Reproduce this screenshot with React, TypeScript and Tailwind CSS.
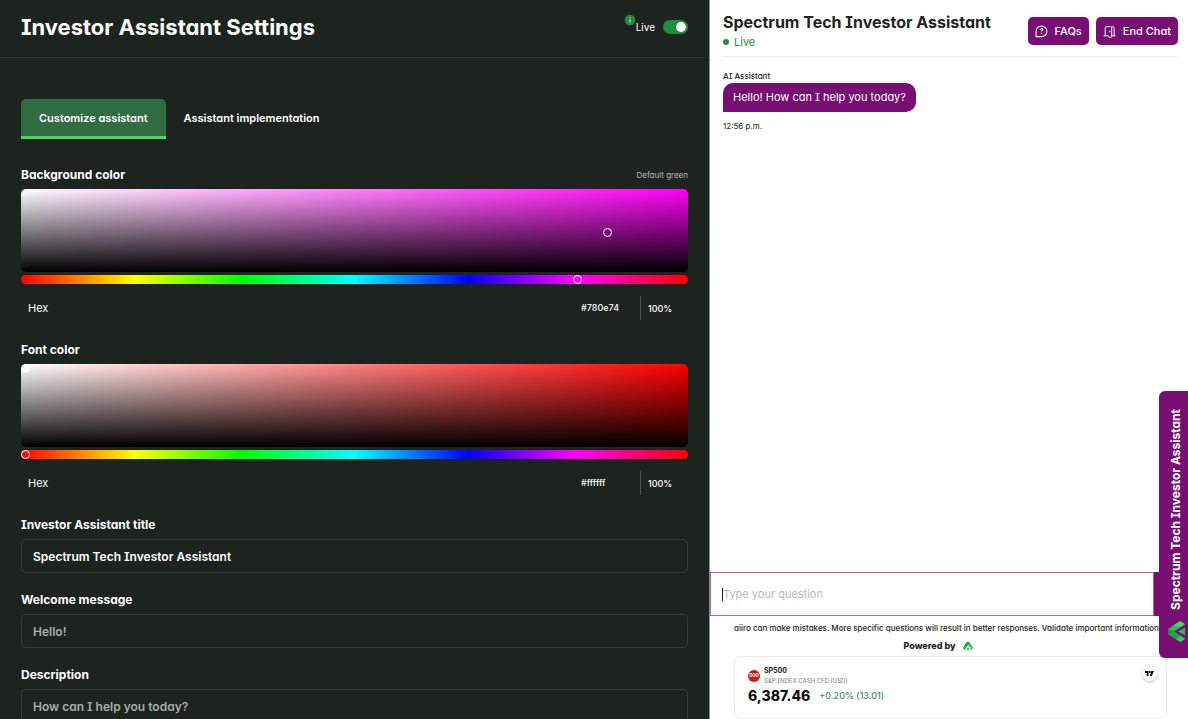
import { useState } from 'react'

interface ColorFieldProps {
  id: string
  label: string
  hint?: string
  hex: string
  hue: number
  saturation: number
  brightness: number
}

const HUE_TRACK =
  'bg-[linear-gradient(to_right,#f00_0%,#ff0_17%,#0f0_33%,#0ff_50%,#00f_67%,#f0f_83%,#f00_100%)]'
const HUE_THUMB =
  '[&::-webkit-slider-thumb]:appearance-none [&::-webkit-slider-thumb]:size-[9px] [&::-webkit-slider-thumb]:rounded-full [&::-webkit-slider-thumb]:border [&::-webkit-slider-thumb]:border-white [&::-webkit-slider-thumb]:bg-transparent'

function ColorField({ id, label, hint, hex, hue: initialHue, saturation, brightness }: ColorFieldProps) {
  const [hue, setHue] = useState(initialHue)
  const [value, setValue] = useState(hex)

  return (
    <section>
      <div className="mb-1 flex h-[21px] items-center justify-between">
        <h2 className="text-[12px] leading-5 font-bold">{label}</h2>
        {hint && (
          <button type="button" className="text-[8px] text-[#b5b9b7]">
            {hint}
          </button>
        )}
      </div>
      {/* saturation / brightness area, black fades up over white-to-hue */}
      <div
        className="relative h-[83px] rounded-[5px]"
        style={{
          backgroundImage: `linear-gradient(to top, #000, transparent), linear-gradient(to right, #fff, hsl(${hue} 100% 50%))`,
        }}
      >
        <div className="absolute top-0 right-[9px] bottom-[9px] left-0">
          <span
            className="absolute size-[9px] rounded-full border border-white"
            style={{
              left: `${saturation}%`,
              top: `${100 - brightness}%`,
              backgroundColor: value,
            }}
          />
        </div>
      </div>
      <input
        type="range"
        min={0}
        max={360}
        value={hue}
        aria-label={`${label} hue`}
        onChange={(e) => setHue(Number(e.target.value))}
        className={`mt-[3px] block h-[9px] w-full appearance-none rounded-full ${HUE_TRACK} ${HUE_THUMB}`}
      />
      <div className="mt-3 flex h-6 items-center pl-[7px] text-[9px]">
        <label htmlFor={id} className="grow text-[11px]">
          Hex
        </label>
        <input
          id={id}
          value={value}
          onChange={(e) => setValue(e.target.value)}
          className="w-[59px] bg-transparent font-medium outline-none"
        />
        <input
          aria-label={`${label} opacity`}
          defaultValue="100%"
          className="h-6 w-12 border-l border-[#4b514e] bg-transparent pl-[7px] font-medium outline-none"
        />
      </div>
    </section>
  )
}

interface TextFieldProps {
  id: string
  label: string
  value?: string
  placeholder?: string
}

function TextField({ id, label, value, placeholder }: TextFieldProps) {
  return (
    <div>
      <label htmlFor={id} className="mb-1 block text-[12px] leading-[21px] font-bold">
        {label}
      </label>
      <input
        id={id}
        defaultValue={value}
        placeholder={placeholder}
        className="block h-[34px] w-full rounded-[5px] border border-[#363c39] bg-transparent px-[11px] text-[12px] font-semibold text-white outline-none placeholder:text-[#a9adab]"
      />
    </div>
  )
}

function SettingsPanel() {
  const [live, setLive] = useState(true)
  const [tab, setTab] = useState('customize')
  const activeTab = 'rounded-t-[5px] border-[#3fdc68] bg-[#326d42]'

  return (
    <div className="min-w-0 overflow-hidden border-r border-[#8a8e8c] bg-[#1d2420] text-white">
      <header className="flex items-center justify-between border-b border-[#272c2a] px-[21px] pt-[11px] pb-[14px]">
        <h1 className="text-[22px] leading-8 font-bold">Investor Assistant Settings</h1>
        <div className="flex items-center">
          <svg viewBox="0 0 12 12" className="mb-[14px] size-3" aria-hidden="true">
            <circle cx="6" cy="6" r="5.3" fill="#1f8e3d" />
            <path d="M6 5.400v3M6 3.200v1" stroke="#cfe8d5" strokeWidth="1.2" />
          </svg>
          <label className="flex cursor-pointer items-center gap-2 text-[10px]">
            <span>Live</span>
            <input
              type="checkbox"
              checked={live}
              onChange={(e) => setLive(e.target.checked)}
              className="peer sr-only"
            />
            <span className="flex h-[14px] w-[25px] items-center rounded-full bg-[#5b625e] p-[2px] peer-checked:justify-end peer-checked:bg-[#1f8e3d]">
              <span className="size-[10px] rounded-full bg-white" />
            </span>
          </label>
        </div>
      </header>

      <main className="px-[21px] pt-[41px]">
        <div role="tablist" className="mb-[25px] flex text-[11px] font-semibold">
          <button
            type="button"
            role="tab"
            aria-selected={tab === 'customize'}
            onClick={() => setTab('customize')}
            className={`h-10 border-b-3 px-[18px] pt-[2px] ${tab === 'customize' ? activeTab : 'border-transparent'}`}
          >
            Customize assistant
          </button>
          <button
            type="button"
            role="tab"
            aria-selected={tab === 'implementation'}
            onClick={() => setTab('implementation')}
            className={`h-10 border-b-3 px-[18px] pt-[2px] ${tab === 'implementation' ? activeTab : 'border-transparent'}`}
          >
            Assistant implementation
          </button>
        </div>

        <div className="flex flex-col gap-[19px]">
          <ColorField
            id="background-hex"
            label="Background color"
            hint="Default green"
            hex="#780e74"
            hue={302}
            saturation={88.4}
            brightness={47}
          />
          <ColorField id="font-hex" label="Font color" hex="#ffffff" hue={0} saturation={0} brightness={100} />
          <div className="flex flex-col gap-4">
            <TextField id="title" label="Investor Assistant title" value="Spectrum Tech Investor Assistant" />
            <TextField id="welcome" label="Welcome message" placeholder="Hello!" />
            <TextField id="description" label="Description" placeholder="How can I help you today?" />
          </div>
        </div>
      </main>
    </div>
  )
}

function FaqIcon() {
  return (
    <svg viewBox="0 0 24 24" className="size-[13px]" fill="none" stroke="currentColor" strokeWidth="2" aria-hidden="true">
      <path d="M2 21.500V12A10 9.800 0 1 1 12 21.500Z" strokeLinejoin="round" />
      <path d="M10.300 8.500a1.900 1.900 0 1 1 2.700 1.800c-.8.400-1 .8-1 1.700M12 14.500v2" />
    </svg>
  )
}

function DoorIcon() {
  return (
    <svg viewBox="0 0 24 24" className="size-[13px]" fill="none" stroke="currentColor" strokeWidth="1.8" aria-hidden="true">
      <path d="M1 20h7M15 20h8M4 20V6.500A3.500 3.500 0 0 1 7.500 3H14" />
      <path d="M16 3h1a3.500 3.500 0 0 1 3.500 3.500V20" />
      <path d="M16 3v18a2 2 0 0 1-2.500 1.800l-2.500-1A3 3 0 0 1 9 19" />
      <path d="M12.500 10.500v3" />
    </svg>
  )
}

/* chevron with a small wedge in its notch */
function BrandMark({ className }: { className: string }) {
  return (
    <svg viewBox="0 0 63 51" className={className} aria-hidden="true">
      <path d="M24 0h15l24 37-10 14-21.500-33L10 51 0 37Z" fill="#2fbf50" />
      <path d="M24 0h15L25 28 10 51 0 37Z" fill="#23a646" />
      <path d="M24 0h15l-7.500 18Z" fill="#178f3a" />
      <path d="m8 25 11 12-9 14L0 37Z" fill="#36cf5c" />
      <path d="m50 17 13 20-10 14-9-14Z" fill="#45d765" />
      <path d="m31.500 30 11 21h-22Z" fill="#2fbf50" />
    </svg>
  )
}

function ChatHeader() {
  const button = 'flex h-7 items-center gap-[7px] rounded-[5px] bg-[#780e74] px-[7px] text-[11px] font-medium text-white'

  return (
    <header className="mr-[10px] ml-[13px] flex justify-between border-b border-[#ececec] pt-3 pb-[6px]">
      <div>
        <h2 className="text-[16px] leading-5 font-bold">Spectrum Tech Investor Assistant</h2>
        <p className="mt-[2px] flex items-center gap-[5px] text-[11px] leading-4 text-[#1f8e3d]">
          <span className="size-[6px] rounded-full bg-[#1f8e3d]" />
          Live
        </p>
      </div>
      <div className="flex gap-[7px] pt-[5px]">
        <button type="button" className={button}>
          <FaqIcon />
          FAQs
        </button>
        <button type="button" className={button}>
          <DoorIcon />
          End Chat
        </button>
      </div>
    </header>
  )
}

function TickerCard() {
  return (
    <article className="mr-[21px] ml-6 rounded-[6px] border border-[#ebebeb] px-[13px] pt-[9px] pb-3">
      <div className="flex items-start justify-between">
        <div className="flex items-center gap-1">
          <span className="flex size-3 items-center justify-center rounded-full bg-[#cc1717] text-[5px] font-bold text-white">
            500
          </span>
          <div>
            <h3 className="text-[7px] leading-[10px] font-bold">SP500</h3>
            <p className="text-[6px] leading-[10px] font-medium text-[#8f8f8f]">S&amp;P INDEX CASH CFD (USD)</p>
          </div>
        </div>
        <span className="-mr-1 flex size-[15px] items-center justify-center rounded-full bg-white shadow-[0_1px_3px_rgba(0,0,0,0.25)]">
          <svg viewBox="0 0 18 10" className="w-[9px]" aria-label="TradingView">
            <path d="M0 0h7v10H3.500V4H0ZM12.500 0H18l-4.500 10H9.500Z" />
            <circle cx="9.500" cy="2" r="2" />
          </svg>
        </span>
      </div>
      <p className="flex items-center gap-[9px] leading-5">
        <span className="text-[14px] font-extrabold text-[#0f0f0f]">6,387.46</span>
        <span className="text-[9px] font-medium text-[#3f8a6a]">+0.20% (13.01)</span>
      </p>
    </article>
  )
}

function ChatPanel() {
  return (
    <div className="relative flex min-w-0 flex-col overflow-hidden bg-white text-[#1d2420]">
      <ChatHeader />

      <div className="grow px-[13px] pt-[13px]">
        <p className="text-[8px] leading-[13px] font-medium">AI Assistant</p>
        <p className="w-fit rounded-[10px] rounded-bl-none bg-[#780e74] px-[10px] py-[6px] text-[11px] leading-[17px] text-white">
          Hello! How can I help you today?
        </p>
        <p className="mt-2 text-[8px] leading-3">12:56 p.m.</p>
      </div>

      <form className="relative flex h-11 shrink-0" onSubmit={(e) => e.preventDefault()}>
        <input
          aria-label="Your question"
          placeholder="Type your question"
          className="min-w-0 grow border border-[#b45fae] px-3 text-[11px] outline-none placeholder:text-[#b9b9b9]"
        />
        {/* text cursor */}
        <span className="absolute top-4 left-3 h-[13px] w-px bg-[#1d2420]" />
        <button type="submit" aria-label="Send" className="w-[34px] bg-[#780e74]" />
      </form>

      <p className="mt-[6px] ml-6 text-[8px] leading-3 font-medium whitespace-nowrap">
        aiiro can make mistakes. More specific questions will result in better responses. Validate important information.
      </p>
      <p className="mt-1 mb-[2px] flex items-center justify-center gap-[7px] pr-[22px] text-[9px] leading-4 font-extrabold">
        Powered by
        <BrandMark className="w-[10px]" />
      </p>
      <TickerCard />

      {/* side launcher, pinned over the chat */}
      <button
        type="button"
        className="absolute right-0 bottom-[61px] flex h-[267px] w-[29px] flex-col items-center justify-end gap-[10px] rounded-l-[6px] bg-[#780e74] pb-4 pl-[5px] text-[12px] font-bold text-white"
      >
        <span className="rotate-180 whitespace-nowrap [writing-mode:vertical-rl]">Spectrum Tech Investor Assistant</span>
        <span className="flex h-[22px] items-center">
          <BrandMark className="w-[21px] -rotate-90" />
        </span>
      </button>
    </div>
  )
}

export default function App() {
  return (
    <div className="grid h-screen grid-cols-[355fr_239fr] overflow-hidden font-['Inter',sans-serif] [font-feature-settings:'cv08','cv11']">
      <SettingsPanel />
      <ChatPanel />
    </div>
  )
}
